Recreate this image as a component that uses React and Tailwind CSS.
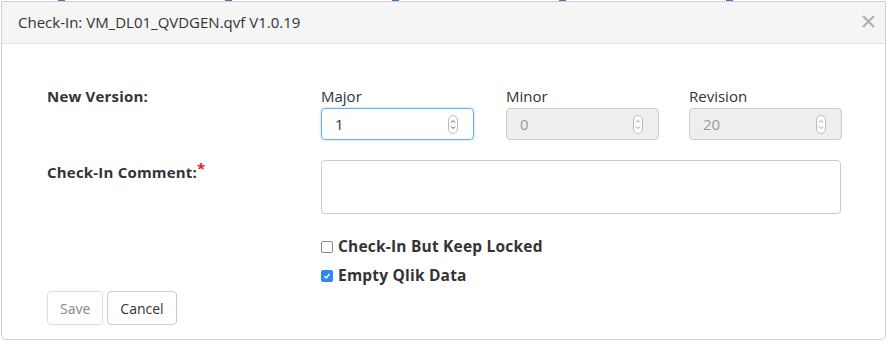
import React from 'react';

function Spinner({ disabled }) {
  const c = disabled ? '#9a9a9a' : '#555';
  return (
    <svg width="10" height="19" viewBox="0 0 10 19" className="shrink-0">
      <rect x="0.5" y="0.5" width="9" height="18" rx="4.5" fill="#fff" stroke="#bbb" />
      <path d="M3 7.5 L5 5.5 L7 7.5" fill="none" stroke={c} strokeWidth="1" />
      <path d="M3 11.5 L5 13.5 L7 11.5" fill="none" stroke={c} strokeWidth="1" />
    </svg>
  );
}

function NumberField({ label, value, focused, disabled }) {
  return (
    <div className="w-[153px] flex flex-col">
      <span className="text-[15px] leading-[20px] mb-[2px]">{label}</span>
      <div
        className={`h-[32px] flex items-center justify-between pl-[13px] pr-[15px] rounded-[4px] border text-[15px] ${
          focused
            ? 'border-[#66afe9] bg-white text-[#333] shadow-[0_0_3px_rgba(102,175,233,0.5)]'
            : disabled
            ? 'border-[#ccc] bg-[#eee] text-[#999]'
            : 'border-[#ccc] bg-white'
        }`}
      >
        <span>{value}</span>
        <Spinner disabled={disabled} />
      </div>
    </div>
  );
}

function Check({ checked, label }) {
  return (
    <label className="flex items-center gap-[5px] h-[20px]">
      {checked ? (
        <span className="w-[12px] h-[12px] rounded-[2px] bg-[#2f86f6] flex items-center justify-center">
          <svg width="8" height="8" viewBox="0 0 8 8">
            <path d="M1.5 4.2 L3.3 6 L6.5 2" fill="none" stroke="#fff" strokeWidth="1.4" />
          </svg>
        </span>
      ) : (
        <span className="w-[12px] h-[12px] rounded-[2px] border border-[#888] bg-white" />
      )}
      <span className="text-[15.5px] font-bold tracking-[0.2px] text-[#333]">{label}</span>
    </label>
  );
}

export default function App() {
  const marks = [58, 227, 394, 561, 728];
  return (
    <div className="w-[887px] h-[341px] bg-white font-['Open_Sans',sans-serif] text-[#333] overflow-hidden">
      <div className="h-[1px] flex">
        {marks.map((m, i) => (
          <div key={m} className="flex" style={{ marginLeft: i === 0 ? m : 160 }}>
            <div className="w-[7px] h-[1px] bg-[#3a78c0]" />
          </div>
        ))}
      </div>
      <div className="mx-px h-[339px] border border-[#d0d0d0] rounded-b-[5px] flex flex-col">
        <div className="h-[42px] bg-[#f5f5f5] border-b border-[#e5e5e5] flex items-center justify-between pl-[16px] pr-[10px] shrink-0">
          <span className="text-[15px]">Check-In: VM_DL01_QVDGEN.qvf V1.0.19</span>
          <svg width="13" height="13" viewBox="0 0 13 13" className="mb-[2px]">
            <path d="M1 1 L12 12 M12 1 L1 12" stroke="#b0b0b0" strokeWidth="2.2" />
          </svg>
        </div>
        <div className="pl-[45px] pt-[42px] flex flex-col">
          <div className="flex">
            <div className="w-[274px] text-[15px] font-bold leading-[20px] tracking-[0.2px]">New Version:</div>
            <div className="flex">
              <NumberField label="Major" value="1" focused />
              <div className="ml-[32px]">
                <NumberField label="Minor" value="0" disabled />
              </div>
              <div className="ml-[30px]">
                <NumberField label="Revision" value="20" disabled />
              </div>
            </div>
          </div>
          <div className="flex mt-[20px]">
            <div className="w-[274px] text-[15px] font-bold leading-[20px] pt-[2px] tracking-[0.2px]">
              Check-In Comment:<span className="text-[#e02020] align-top relative -top-[4px]">*</span>
            </div>
            <div className="w-[520px] h-[54px] rounded-[4px] border border-[#ccc] bg-white" />
          </div>
          <div className="flex flex-col ml-[274px] mt-[23px] gap-[9px]">
            <Check label="Check-In But Keep Locked" />
            <Check label="Empty Qlik Data" checked />
          </div>
          <div className="flex gap-[4px] mt-[5px]">
            <button className="h-[34px] px-[12px] rounded-[4px] border border-[#ddd] bg-white text-[14px] text-[#888]">Save</button>
            <button className="h-[34px] px-[12px] rounded-[4px] border border-[#ccc] bg-white text-[14px] text-[#333]">Cancel</button>
          </div>
        </div>
      </div>
    </div>
  );
}
